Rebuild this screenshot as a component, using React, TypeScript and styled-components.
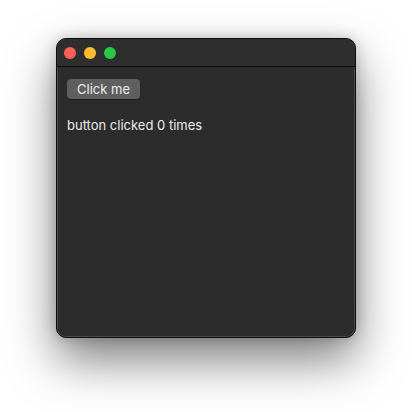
import React, { useState } from "react";
import styled, { createGlobalStyle } from "styled-components";

const GlobalStyle = createGlobalStyle`
  html, body {
    margin: 0;
    padding: 0;
    background: #ffffff;
  }
  body {
    font-family: "Inter", "Liberation Sans", Arial, sans-serif;
  }
`;

const Stage = styled.div`
  width: 412px;
  height: 412px;
  box-sizing: border-box;
  padding: 38px 0 0 56px;
`;

const Window = styled.div`
  width: 300px;
  height: 300px;
  box-sizing: border-box;
  background: #2c2c2c;
  border-radius: 10px;
  border: 1px solid #0e0e0e;
  box-shadow: inset 0 0 0 1px #4a4a4a, 0 22px 48px rgba(0, 0, 0, 0.5),
    0 0 14px rgba(0, 0, 0, 0.2);
  display: flex;
  flex-direction: column;
  overflow: hidden;
`;

const TitleBar = styled.div`
  height: 27px;
  flex-shrink: 0;
  display: flex;
  align-items: center;
  gap: 8px;
  padding-left: 7px;
  border-bottom: 1px solid #0a0a0a;
  background: #2e2e2e;
`;

const Light = styled.span<{ $color: string }>`
  width: 12px;
  height: 12px;
  border-radius: 50%;
  background: ${(p) => p.$color};
`;

const Content = styled.div`
  padding: 12px 10px;
  display: flex;
  flex-direction: column;
  align-items: flex-start;
  gap: 18px;
`;

const Button = styled.button`
  height: 20px;
  width: 73px;
  padding: 0 10px;
  border: none;
  border-radius: 4px;
  background: #5f5f5f;
  color: #ececec;
  font-family: "Inter", "Liberation Sans", Arial, sans-serif;
  font-size: 13px;
  line-height: 20px;
  box-shadow: 0 0.5px 1px rgba(0, 0, 0, 0.4);
  cursor: pointer;
`;

const Label = styled.div`
  color: #ececec;
  font-size: 13px;
  line-height: 16px;
`;

export default function App() {
  const [count, setCount] = useState(0);
  return (
    <>
      <GlobalStyle />
      <Stage>
        <Window>
          <TitleBar>
            <Light $color="#ff5f57" />
            <Light $color="#febc2e" />
            <Light $color="#28c840" />
          </TitleBar>
          <Content>
            <Button onClick={() => setCount(count + 1)}>Click me</Button>
            <Label>button clicked {count} times</Label>
          </Content>
        </Window>
      </Stage>
    </>
  );
}
